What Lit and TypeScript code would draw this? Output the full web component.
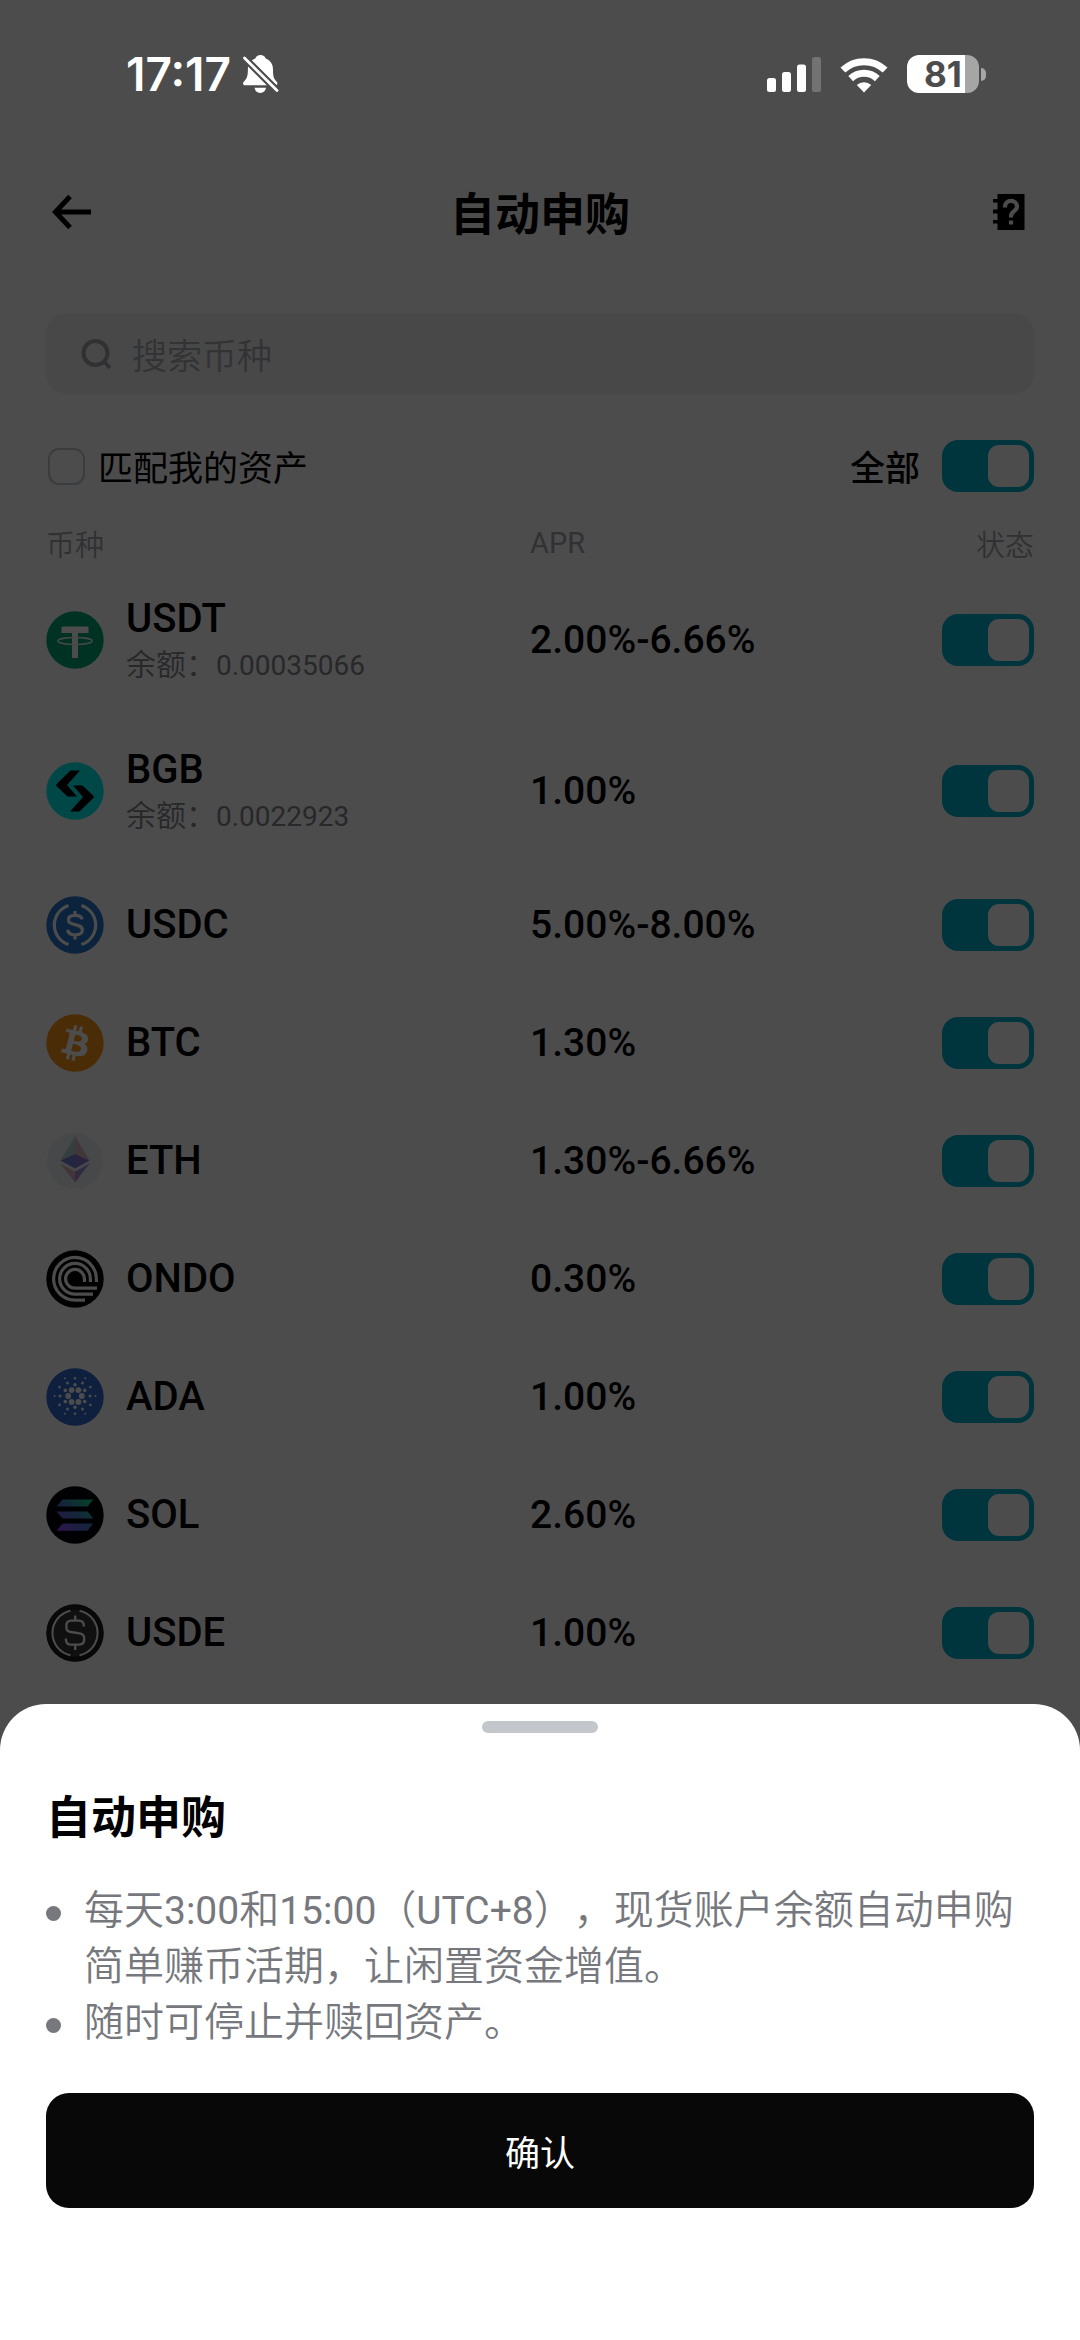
import { LitElement, html, svg, css, nothing, SVGTemplateResult } from "lit";
import { customElement, state } from "lit/decorators.js";

interface Coin {
  name: string;
  apr: string;
  balance?: string;
}

const COINS: Coin[] = [
  { name: "USDT", apr: "2.00%-6.66%", balance: "0.00035066" },
  { name: "BGB", apr: "1.00%", balance: "0.0022923" },
  { name: "USDC", apr: "5.00%-8.00%" },
  { name: "BTC", apr: "1.30%" },
  { name: "ETH", apr: "1.30%-6.66%" },
  { name: "ONDO", apr: "0.30%" },
  { name: "ADA", apr: "1.00%" },
  { name: "SOL", apr: "2.60%" },
  { name: "USDE", apr: "1.00%" },
];

/* Rings of the ADA mark: distance from centre, dot radius, first angle. */
const ADA_RINGS = [
  { distance: 6.8, radius: 2.9, start: 0 },
  { distance: 11.2, radius: 1.8, start: 30 },
  { distance: 15, radius: 1.5, start: 0 },
  { distance: 17.8, radius: 1.3, start: 30 },
  { distance: 20.4, radius: 1, start: 0 },
];

const adaDots = ADA_RINGS.flatMap(({ distance, radius, start }) =>
  [0, 60, 120, 180, 240, 300].map((step) => {
    const angle = ((start + step) * Math.PI) / 180;
    return svg`<circle
      cx=${(29 + distance * Math.cos(angle)).toFixed(2)}
      cy=${(28 + distance * Math.sin(angle)).toFixed(2)}
      r=${radius}></circle>`;
  })
);

const LOGOS: Record<string, SVGTemplateResult> = {
  USDT: svg`
    <circle cx="29" cy="29" r="28.7" fill="#00a878"/>
    <path d="M15.5 15.5H42.5V22H32V47H26V22H15.5Z" fill="#fff"/>
    <ellipse cx="29" cy="30" rx="17" ry="3.4" fill="none" stroke="#e4f4ee" stroke-width="1.5"/>`,
  BGB: svg`
    <circle cx="29" cy="29" r="28.7" fill="#00f0f0"/>
    <path d="M24.5 8.5H34L21 23 31 34.4H21.5L10.6 24.2Q9.6 23 10.6 21.9Z" fill="#000"/>
    <path d="M24.5 8.5H34L21 23 31 34.4H21.5L10.6 24.2Q9.6 23 10.6 21.9Z" fill="#000" transform="rotate(180 29 29)"/>`,
  USDC: svg`
    <circle cx="29" cy="29" r="28.7" fill="#2775ca"/>
    <g fill="none" stroke="#fff" stroke-width="3.2">
      <path d="M22.6 9.4A20.6 20.6 0 0 0 22.6 48.6M35.4 9.4A20.6 20.6 0 0 1 35.4 48.6"/>
      <path d="M36.2 23.4C35.6 20.6 33 19.4 29 19.4 24.8 19.4 22.4 21.2 22.4 24 22.4 30.4 36.4 26.8 36.4 34 36.4 37 33.6 38.8 29.2 38.8 24.6 38.8 22 37 21.6 33.8M29 15V19.4M29 38.8V43.4"/>
    </g>`,
  BTC: svg`
    <circle cx="29" cy="29" r="28.7" fill="#f7931a"/>
    <path transform="scale(1.8125)" fill="#fff" d="M23.189 14.02c.314-2.096-1.283-3.223-3.465-3.975l.708-2.84-1.728-.43-.69 2.765c-.454-.114-.92-.22-1.385-.326l.695-2.783L15.596 6l-.708 2.839c-.376-.086-.746-.17-1.104-.26l.002-.009-2.384-.595-.46 1.846s1.283.294 1.256.312c.7.175.826.638.805 1.006l-.806 3.235c.048.012.11.03.18.057l-.183-.045-1.13 4.532c-.086.212-.303.531-.793.41.018.025-1.256-.313-1.256-.313l-.858 1.978 2.25.561c.418.105.828.215 1.231.318l-.715 2.872 1.727.43.708-2.84c.472.127.93.245 1.378.357l-.706 2.828 1.728.43.715-2.866c2.948.558 5.164.333 6.097-2.333.752-2.146-.037-3.385-1.588-4.192 1.13-.26 1.98-1.003 2.207-2.538zm-3.95 5.538c-.533 2.147-4.148.986-5.32.695l.95-3.805c1.172.293 4.929.872 4.37 3.11zm.535-5.569c-.487 1.953-3.495.96-4.47.717l.86-3.45c.975.243 4.118.696 3.61 2.733z"/>`,
  ETH: svg`
    <circle cx="29" cy="29" r="28" fill="#edf0f4"/>
    <path d="M29 4 14.5 28.4 29 22Z" fill="#b4d3d3"/>
    <path d="M29 4 43.5 28.4 29 22Z" fill="#d9b4c0"/>
    <path d="M29 22 14.5 28.4 29 36.6Z" fill="#7480d2"/>
    <path d="M29 22 43.5 28.4 29 36.6Z" fill="#8a78cb"/>
    <path d="M14.5 31.4 29 39.8V50.6Z" fill="#e2aebb"/>
    <path d="M43.5 31.4 29 39.8V50.6Z" fill="#a58fd4"/>`,
  ONDO: svg`
    <circle cx="29" cy="29" r="28.7" fill="#000"/>
    <g fill="none" stroke="#fff" stroke-width="3.2">
      <path d="M50.4 32V29A21.4 21.4 0 1 0 29 50.2H39"/>
      <path d="M44.4 32V29A15.4 15.4 0 1 0 29 44.2H47"/>
      <path d="M38.4 32V29A9.4 9.4 0 1 0 29 38.2H51"/>
    </g>`,
  ADA: svg`
    <circle cx="29" cy="29" r="28.7" fill="#3468d1"/>
    <g fill="#fff">${adaDots}</g>`,
  SOL: svg`
    <defs>
      <linearGradient id="sol" gradientUnits="userSpaceOnUse" x1="14" y1="46" x2="44" y2="12">
        <stop offset="0" stop-color="#9945ff"/>
        <stop offset=".5" stop-color="#4a78c8"/>
        <stop offset="1" stop-color="#14e090"/>
      </linearGradient>
    </defs>
    <circle cx="29" cy="29" r="28.7" fill="#050308"/>
    <path fill="url(#sol)" d="M16.5 13.4H47.2L41.6 20.4H10.6ZM10.6 25.4H41.6L47.2 32.6H16.5ZM16.5 37.4H47.2L41.6 44.8H10.6Z"/>`,
  USDE: svg`
    <circle cx="29" cy="29" r="28.7" fill="#383838"/>
    <circle cx="29" cy="29" r="26" fill="none" stroke="#1c1c1c" stroke-width="5"/>
    <g fill="none" stroke="#fff">
      <path stroke-width="2" d="M24.4 6.8A22.7 22.7 0 0 0 24.4 51.2M33.6 6.8A22.7 22.7 0 0 1 33.6 51.2"/>
      <path stroke-width="2.4" d="M37.8 22.4V21.4C37.8 18.4 35.8 16.6 32.8 16.6H25.4C22.2 16.6 20.4 18.6 20.4 21.6V23.2C20.4 26 22 27.6 24.6 28L33.6 29.4C36.4 29.8 38.2 31.4 38.2 34.4V35.6C38.2 38.6 36.2 40.6 33.2 40.6H25C22 40.6 20 38.8 20 35.8V34.6M29.2 11.4V16.6M29.2 40.6V46"/>
    </g>`,
};

@customElement("coin-logo")
class CoinLogo extends LitElement {
  static properties = { coin: { type: String } };

  static styles = css`
    :host {
      display: block;
      flex: none;
    }
    svg {
      display: block;
      width: 58px;
      height: 58px;
    }
  `;

  declare coin: string;

  render() {
    return html`<svg viewBox="0 0 58 58" aria-hidden="true">${LOGOS[this.coin] ?? nothing}</svg>`;
  }
}

@customElement("app-root")
class AppRoot extends LitElement {
  static styles = css`
    :host {
      display: grid;
      min-height: 100vh;
      background: #fff;
      color: #000;
      font-family: "Noto Sans CJK SC", sans-serif;
      font-size: 35px;
      line-height: 52px;
      text-spacing-trim: space-all;
    }
    * {
      box-sizing: border-box;
    }
    svg {
      display: block;
      flex: none;
    }
    h1,
    h2,
    ul {
      margin: 0;
      padding: 0;
    }
    button {
      margin: 0;
      padding: 0;
      border: 0;
      background: none;
      font: inherit;
      color: inherit;
    }
    .latin {
      font-family: Roboto, sans-serif;
    }

    .screen,
    .scrim,
    .sheet {
      grid-area: 1 / 1;
      min-width: 0;
    }
    .scrim {
      z-index: 1;
      background: rgba(0, 0, 0, 0.7);
    }

    /* Status bar */
    .status {
      position: relative;
      z-index: 2;
      display: flex;
      align-items: center;
      justify-content: space-between;
      height: 148px;
      padding: 0 94px 0 126px;
      color: #fff;
    }
    .clock,
    .signals {
      display: flex;
      align-items: center;
    }
    .clock {
      gap: 12px;
      font-family: Inter, sans-serif;
      font-size: 46px;
      font-weight: 600;
    }
    .signals {
      gap: 19px;
    }
    .battery {
      display: flex;
      align-items: center;
      gap: 2px;
    }
    .level {
      width: 72px;
      height: 38px;
      border-radius: 12px;
      background: linear-gradient(to right, #fff 81%, #a6a6a6 81%);
      color: #4c4c4c;
      font-family: Inter, sans-serif;
      font-size: 35px;
      font-weight: 700;
      line-height: 38px;
      text-align: center;
    }
    .tip {
      width: 5px;
      height: 13px;
      border-radius: 0 6px 6px 0;
      background: #a6a6a6;
    }

    /* Page header */
    .nav {
      display: grid;
      grid-template-columns: 1fr auto 1fr;
      align-items: center;
      height: 128px;
      padding: 0 46px;
    }
    .nav button {
      justify-self: start;
    }
    .nav .help {
      justify-self: end;
    }
    .title {
      font-size: 45px;
      font-weight: 700;
      line-height: 64px;
    }

    .content {
      padding: 37px 46px 0;
    }
    .search {
      display: flex;
      align-items: center;
      gap: 20px;
      height: 81px;
      padding: 0 34px;
      border-radius: 20px;
      background: #f1f1f1;
    }
    .search input {
      flex: 1;
      min-width: 0;
      padding: 0;
      border: 0;
      outline: 0;
      background: none;
      font: inherit;
      font-weight: 350;
      color: #000;
    }
    .search input::placeholder {
      color: #a9acb3;
      opacity: 1;
    }

    .filters {
      display: flex;
      align-items: center;
      justify-content: space-between;
      margin-top: 46px;
    }
    .filters label {
      display: flex;
      align-items: center;
    }
    .match {
      gap: 13px;
      padding-left: 2px;
    }
    .all {
      gap: 22px;
      font-weight: 500;
    }
    .box {
      appearance: none;
      width: 37px;
      height: 37px;
      margin: 0;
      border: 2px solid #c6c8cc;
      border-radius: 11px;
    }
    .box:checked {
      background: #03aac7;
    }
    .switch {
      appearance: none;
      display: flex;
      flex: none;
      width: 92px;
      height: 52px;
      margin: 0;
      padding: 5px;
      border-radius: 16px;
      background: #b9bcc2;
    }
    .switch::before {
      content: "";
      width: 41px;
      height: 42px;
      border-radius: 11px;
      background: #fff;
    }
    .switch:checked {
      justify-content: flex-end;
      background: #00b2cc;
    }

    /* Coin table */
    table {
      width: 100%;
      margin-top: 30px;
      border-collapse: collapse;
      table-layout: fixed;
    }
    th,
    td {
      padding: 0;
      text-align: left;
      vertical-align: middle;
    }
    thead th {
      height: 42px;
      color: #a3a6ab;
      font-size: 29px;
      font-weight: 350;
      line-height: 42px;
    }
    thead .latin {
      font-weight: 400;
    }
    .col-coin {
      width: 49%;
    }
    thead .col-state {
      width: 92px;
      text-align: right;
    }
    .row {
      height: 118px;
    }
    .row.tall {
      height: 151px;
    }
    .coin {
      display: flex;
      align-items: center;
      gap: 22px;
    }
    .tall .labels {
      padding-bottom: 6px;
    }
    .name {
      font-size: 40px;
      font-weight: 500;
      line-height: 50px;
    }
    .balance {
      color: #83868c;
      font-size: 30px;
      font-weight: 350;
      line-height: 36px;
    }
    .balance .latin {
      font-size: 28px;
      font-weight: 400;
      line-height: 28px;
    }
    .apr {
      font-size: 39px;
      font-weight: 500;
    }

    /* Bottom sheet */
    .sheet {
      z-index: 2;
      align-self: end;
      display: flex;
      flex-direction: column;
      padding: 17px 46px 132px;
      border-radius: 46px 46px 0 0;
      background: #fff;
    }
    .handle {
      align-self: center;
      width: 116px;
      height: 12px;
      border-radius: 6px;
      background: #c3c6ca;
    }
    .sheet .title {
      margin-top: 50px;
    }
    .notes {
      margin-top: 32px;
      list-style: none;
      color: #76787d;
      font-size: 40px;
      font-weight: 350;
      line-height: 56px;
    }
    .notes li {
      display: flex;
      align-items: flex-start;
      gap: 23px;
    }
    .notes li::before {
      content: "";
      flex: none;
      width: 15px;
      height: 15px;
      margin-top: 27px;
      border-radius: 50%;
      background: #76787d;
    }
    .notes .latin {
      font-size: 39px;
      font-weight: 400;
      line-height: 39px;
    }
    .sheet .confirm {
      height: 115px;
      margin-top: 46px;
      border-radius: 23px;
      background: #080808;
      color: #fff;
    }
  `;

  @state() private enabled = new Set(COINS.map((coin) => coin.name));

  private toggle(name: string) {
    const next = new Set(this.enabled);
    if (!next.delete(name)) next.add(name);
    this.enabled = next;
  }

  private toggleAll(event: Event) {
    const on = (event.target as HTMLInputElement).checked;
    this.enabled = new Set(on ? COINS.map((coin) => coin.name) : []);
  }

  private renderStatus() {
    return html`
      <div class="status">
        <div class="clock">
          <span>17:17</span>
          <svg width="36" height="40" viewBox="0 0 36 40" fill="#fff" aria-hidden="true">
            <defs>
              <mask id="cut" maskUnits="userSpaceOnUse" x="0" y="0" width="36" height="40">
                <rect width="36" height="40" fill="#fff"/>
                <path d="M-1 1.5 38 40.5" stroke="#000" stroke-width="7"/>
              </mask>
            </defs>
            <g mask="url(#cut)">
              <path d="M17.5 1c2.6 0 4.5 1.3 5.2 3.4 4.8 1.8 7.3 5.8 7.3 11 0 7.4.8 9 3.8 12.4 1.3 1.6.5 3.4-1.6 3.4H2.3c-2.2 0-2.9-1.8-1.6-3.4 3-3.4 4.2-5 4.2-12.4 0-5.2 2.5-9.2 7.4-11C13 2.3 14.9 1 17.5 1z"/>
            </g>
            <path d="M11.5 33.8H23C22.4 37 20.4 39 17.2 39S12.1 37 11.5 33.8Z"/>
            <path d="M1.5 4 34 36.5" stroke="#fff" stroke-width="2.8" stroke-linecap="round"/>
          </svg>
        </div>
        <div class="signals">
          <svg width="54" height="36" viewBox="0 0 54 36" fill="#fff" aria-hidden="true">
            <rect y="22" width="9" height="14" rx="2.5"/>
            <rect x="15" y="16" width="9" height="20" rx="2.5"/>
            <rect x="30" y="8.5" width="9" height="27.5" rx="2.5"/>
            <rect x="45" y="1" width="9" height="35" rx="2.5" fill="#737373"/>
          </svg>
          <svg width="48" height="37" viewBox="0 0 48 37" fill="none" stroke="#fff" stroke-width="7" aria-hidden="true">
            <path d="M2.9 14A30.8 30.8 0 0 1 45.1 14"/>
            <path d="M10.7 22.6A19.5 19.5 0 0 1 37.3 22.6"/>
            <path d="M24 36.5 16.8 29A10.5 10.5 0 0 1 31.2 29Z" fill="#fff" stroke="none"/>
          </svg>
          <div class="battery">
            <div class="level">81</div>
            <div class="tip"></div>
          </div>
        </div>
      </div>
    `;
  }

  private renderNav() {
    return html`
      <header class="nav">
        <button type="button" aria-label="返回">
          <svg width="46" height="46" viewBox="0 0 46 46" fill="none" stroke="#000" stroke-width="5" aria-hidden="true">
            <path d="M24 7.5 9.5 23 24 38.5M9 23H45"/>
          </svg>
        </button>
        <h1 class="title">自动申购</h1>
        <button class="help" type="button" aria-label="帮助">
          <svg width="46" height="46" viewBox="0 0 46 46" aria-hidden="true">
            <path d="M9.5 5H36.5V41H9.5V34.5H5V31H9.5V24.5H5V20.5H9.5V13.5H5V10H9.5Z" fill="#000"/>
            <path d="M17 18.5V17.8A6 6 0 0 1 29 17.8C29 22 23 22.5 23 27V28.5" fill="none" stroke="#fff" stroke-width="4.2"/>
            <rect x="20.9" y="31.5" width="4.2" height="4" fill="#fff"/>
          </svg>
        </button>
      </header>
    `;
  }

  private renderRow(coin: Coin) {
    return html`
      <tr class="row ${coin.balance ? "tall" : ""}">
        <td>
          <div class="coin">
            <coin-logo .coin=${coin.name}></coin-logo>
            <div class="labels">
              <div class="name latin">${coin.name}</div>
              ${coin.balance
                ? html`<div class="balance">余额：<span class="latin">${coin.balance}</span></div>`
                : nothing}
            </div>
          </div>
        </td>
        <td class="apr latin">${coin.apr}</td>
        <td>
          <input
            class="switch"
            type="checkbox"
            role="switch"
            aria-label=${coin.name}
            .checked=${this.enabled.has(coin.name)}
            @change=${() => this.toggle(coin.name)}
          />
        </td>
      </tr>
    `;
  }

  render() {
    return html`
      <main class="screen">
        ${this.renderStatus()} ${this.renderNav()}
        <div class="content">
          <label class="search">
            <svg width="32" height="32" viewBox="0 0 32 32" fill="none" stroke="#a0a3aa" stroke-width="4" aria-hidden="true">
              <circle cx="15.5" cy="15" r="12"/>
              <path d="M23.5 23 30 30"/>
            </svg>
            <input type="search" placeholder="搜索币种" aria-label="搜索币种" />
          </label>
          <div class="filters">
            <label class="match"><input class="box" type="checkbox" />匹配我的资产</label>
            <label class="all">
              全部
              <input
                class="switch"
                type="checkbox"
                role="switch"
                .checked=${this.enabled.size === COINS.length}
                @change=${this.toggleAll}
              />
            </label>
          </div>
          <table>
            <thead>
              <tr>
                <th class="col-coin" scope="col">币种</th>
                <th class="latin" scope="col">APR</th>
                <th class="col-state" scope="col">状态</th>
              </tr>
            </thead>
            <tbody>
              ${COINS.map((coin) => this.renderRow(coin))}
            </tbody>
          </table>
        </div>
      </main>
      <div class="scrim"></div>
      <section class="sheet" role="dialog" aria-modal="true" aria-labelledby="sheet-title">
        <div class="handle"></div>
        <h2 class="title" id="sheet-title">自动申购</h2>
        <ul class="notes">
          <li>
            <div>每天<span class="latin">3:00</span>和<span class="latin">15:00</span>（<span class="latin">UTC+8</span>），现货账户余额自动申购<wbr>简单赚币活期，让闲置资金增值。</div>
          </li>
          <li><div>随时可停止并赎回资产。</div></li>
        </ul>
        <button class="confirm" type="button">确认</button>
      </section>
    `;
  }
}
